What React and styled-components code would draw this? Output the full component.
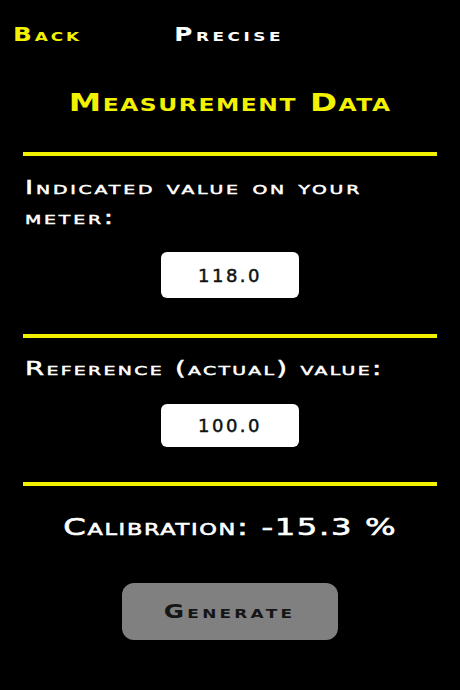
import React, { useState } from 'react';
import styled, { createGlobalStyle } from 'styled-components';

const GlobalStyle = createGlobalStyle`
  html, body {
    margin: 0;
    padding: 0;
    background: #000;
  }
  #root {
    min-height: 690px;
  }
`

const YELLOW = '#f2f200';

const Screen = styled.div`
  width: 460px;
  min-height: 690px;
  background: #000;
  display: flex;
  flex-direction: column;
  font-family: "DejaVu Sans", "Liberation Sans", sans-serif;
  font-weight: bold;
  color: #fff;
`

// wide small-caps text, standing in for the Bank Gothic look
const Wide = styled.span`
  display: inline-block;
  font-variant: small-caps;
  white-space: ${(p) => (p.$wrap ? 'normal' : 'nowrap')};
  letter-spacing: ${(p) => p.$ls ?? 1}px;
  transform: scaleX(${(p) => p.$sx ?? 1.3});
  transform-origin: ${(p) => p.$origin || 'center'};
  ${(p) => p.$width && `width: ${p.$width}px;`}
`

const TopBar = styled.div`
  height: 68px;
  display: grid;
  grid-template-columns: 1fr auto 1fr;
  align-items: center;
  padding: 0 15px 0 13px;
  font-size: 19px;
  line-height: 19px;
`

const NavButton = styled.button`
  justify-self: start;
  background: none;
  border: none;
  padding: 0;
  font: inherit;
  color: ${YELLOW};
  cursor: pointer;
`

const NavTitle = styled.div`
  color: #fff;
  text-align: center;
`

const Heading = styled.h1`
  margin: 22px 0 0;
  font-size: 25px;
  line-height: 25px;
  font-weight: bold;
  color: ${YELLOW};
  text-align: center;
`

const Divider = styled.div`
  margin: ${(p) => p.$top}px 23px 0;
  height: 4px;
  background: ${YELLOW};
`

const Label = styled.div`
  margin-top: ${(p) => p.$top}px;
  padding-left: 25px;
  font-size: 19px;
  line-height: 30px;
  font-weight: normal;
  -webkit-text-stroke: 0.5px #fff;
`

const FieldRow = styled.div`
  margin-top: ${(p) => p.$top}px;
  display: flex;
  justify-content: center;
`

const Field = styled.input`
  box-sizing: border-box;
  width: 138px;
  height: ${(p) => p.$h}px;
  border: none;
  border-radius: 6px;
  background: #fff;
  color: #111;
  font-family: "DejaVu Sans", "Liberation Sans", sans-serif;
  font-size: 18px;
  letter-spacing: 2.5px;
  -webkit-text-stroke: 0.5px #111;
  text-align: center;
  padding: 0;
  outline: none;
`

const Result = styled.div`
  margin-top: 30px;
  font-size: 23px;
  line-height: 23px;
  font-weight: normal;
  -webkit-text-stroke: 0.6px #fff;
  text-align: center;
`

const ButtonRow = styled.div`
  margin-top: 44px;
  display: flex;
  justify-content: center;
`

const GenerateButton = styled.button`
  width: 216px;
  height: 57px;
  border: none;
  border-radius: 12px;
  background: #808080;
  color: #151515;
  font-family: inherit;
  font-weight: bold;
  font-size: 19px;
  line-height: 19px;
  cursor: pointer;
`

export default function App() {
  const [indicated, setIndicated] = useState('118.0');
  const [reference, setReference] = useState('100.0');

  const ind = parseFloat(indicated);
  const ref = parseFloat(reference);
  const calibration = ind ? (((ref - ind) / ind) * 100).toFixed(1) : '0.0';

  return (
    <Screen>
      <GlobalStyle />
      <TopBar>
        <NavButton>
          <Wide $origin="left" $ls={2.2}>Back</Wide>
        </NavButton>
        <NavTitle>
          <Wide $ls={2.7}>Precise</Wide>
        </NavTitle>
        <div />
      </TopBar>

      <Heading>
        <Wide $ls={1.2}>Measurement Data</Wide>
      </Heading>

      <Divider $top={37} />

      <Label $top={16}>
        <Wide $wrap $origin="left" $sx={1.45} $ls={1.95} $width={283}>
          Indicated value on your meter:
        </Wide>
      </Label>
      <FieldRow $top={20}>
        <Field $h={46} value={indicated} onChange={(e) => setIndicated(e.target.value)} />
      </FieldRow>

      <Divider $top={36} />

      <Label $top={15}>
        <Wide $origin="left" $sx={1.45} $ls={1.6}>Reference (actual) value:</Wide>
      </Label>
      <FieldRow $top={21}>
        <Field $h={43} value={reference} onChange={(e) => setReference(e.target.value)} />
      </FieldRow>

      <Divider $top={35} />

      <Result>
        <Wide $sx={1.4} $ls={1.2}>Calibration: {calibration} %</Wide>
      </Result>

      <ButtonRow>
        <GenerateButton>
          <Wide $ls={2.5}>Generate</Wide>
        </GenerateButton>
      </ButtonRow>
    </Screen>
  );
}
